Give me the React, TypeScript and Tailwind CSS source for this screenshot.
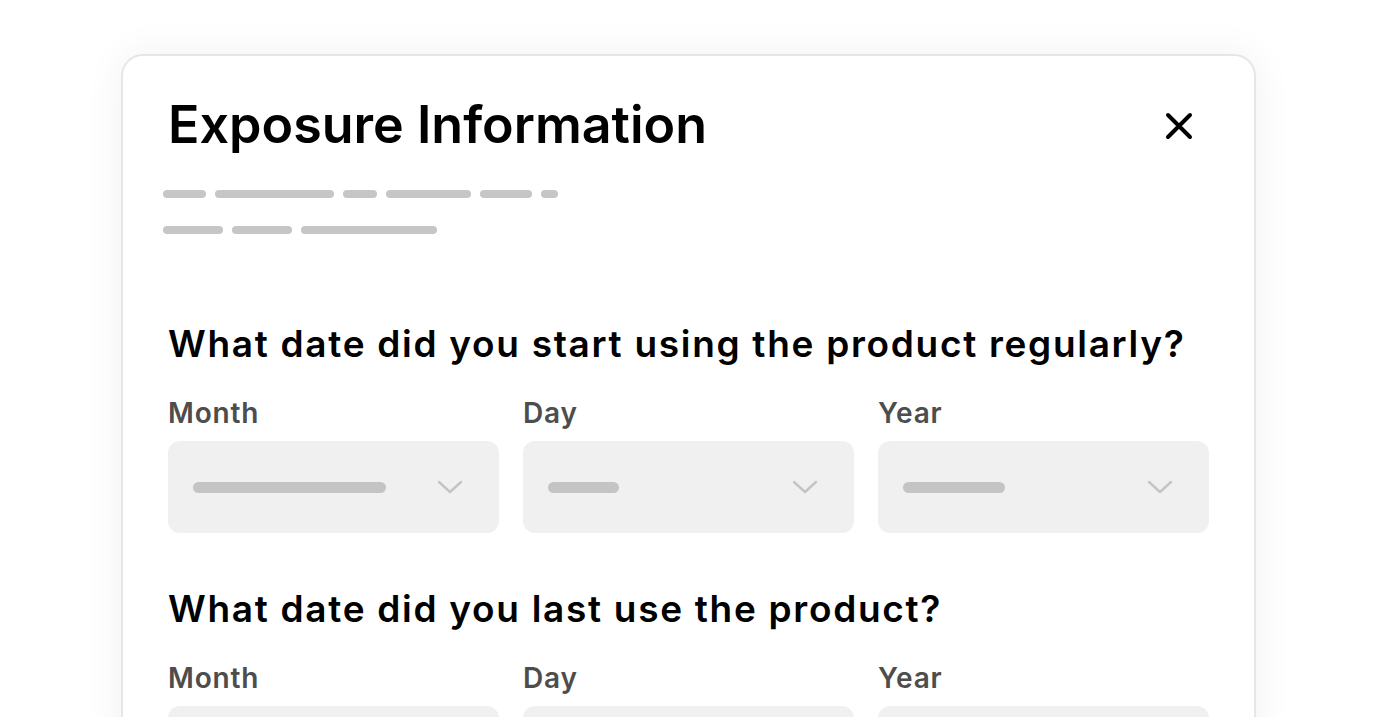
const titleBars = [
  [43, 119, 34, 85, 52, 17],
  [60, 60, 136],
];

const fields = [
  { label: "Month", bar: 193 },
  { label: "Day", bar: 71 },
  { label: "Year", bar: 102 },
];

function Chevron() {
  return (
    <svg width="26" height="16" viewBox="0 0 26 16" fill="none" className="mr-[36px] shrink-0">
      <path d="M2 3l11 10 11-10" stroke="#c4c4c4" strokeWidth="2.4" strokeLinecap="round" strokeLinejoin="round" />
    </svg>
  );
}

function DateQuestion({ question }: { question: string }) {
  return (
    <div>
      <h2 className="text-[37px] leading-none font-semibold text-black tracking-[1.7px]">{question}</h2>
      <div className="grid grid-cols-3 gap-6 mt-[37px]">
        {fields.map((f) => (
          <div key={f.label}>
            <div className="text-[28px] leading-none font-semibold text-[#4d4d4d] tracking-[0.8px]">{f.label}</div>
            <div className="mt-[14px] h-[92px] rounded-xl bg-[#f0f0f0] flex items-center justify-between pl-[25px]">
              <div className="h-[11px] rounded-full bg-[#c4c4c4]" style={{ width: f.bar }} />
              <Chevron />
            </div>
          </div>
        ))}
      </div>
    </div>
  );
}

export default function App() {
  return (
    <div className="min-h-[717px] h-[717px] overflow-hidden bg-white px-[121px] pt-[54px]" style={{ fontFamily: "Inter, 'Noto Sans', sans-serif" }}>
      <div className="border-2 border-[#e6e6ea] rounded-[22px] bg-white shadow-[0_0_40px_rgba(0,0,0,0.06)] px-[45px] pt-[43px] pb-10 min-h-[800px]">
        <div className="flex items-start justify-between">
          <h1 className="text-[52px] leading-none font-semibold text-black tracking-normal">Exposure Information</h1>
          <svg width="30" height="30" viewBox="0 0 30 30" className="mt-[12px] mr-[15px]">
            <path d="M4 4l22 22M26 4L4 26" stroke="#000" strokeWidth="4" strokeLinecap="round" />
          </svg>
        </div>
        <div className="mt-[39px] -ml-[5px] flex flex-col gap-[28px]">
          {titleBars.map((row, i) => (
            <div key={i} className="flex gap-[9px]">
              {row.map((w, j) => (
                <div key={j} className="h-2 rounded-full bg-[#c6c6c6]" style={{ width: w }} />
              ))}
            </div>
          ))}
        </div>
        <div className="mt-[91px] flex flex-col gap-[57px]">
          <DateQuestion question="What date did you start using the product regularly?" />
          <DateQuestion question="What date did you last use the product?" />
        </div>
      </div>
    </div>
  );
}
